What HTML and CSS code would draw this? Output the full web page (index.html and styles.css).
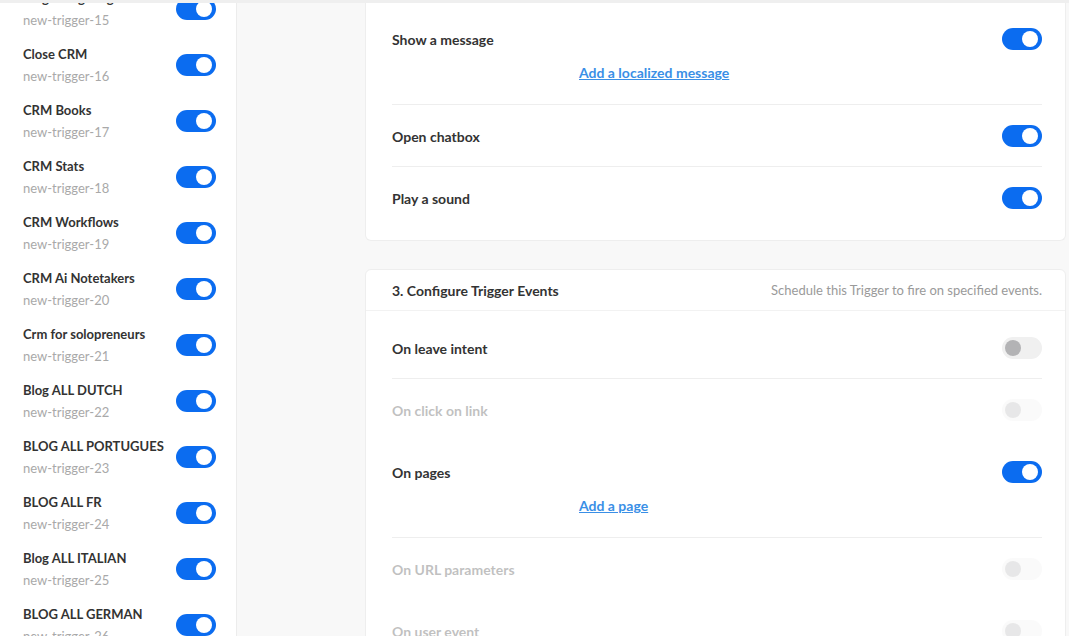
FILE: index.html
```html
<!DOCTYPE html>
<html>
<head>
<meta charset="utf-8">
<link rel="stylesheet" href="styles.css">
</head>
<body>
<div class="app">
  <aside class="sidebar">
    <ul class="trigger-list">
      <li class="trigger"><div class="trigger-text"><div class="trigger-name">Blog Design tags</div><div class="trigger-id">new-trigger-15</div></div><span class="toggle on"></span></li>
      <li class="trigger"><div class="trigger-text"><div class="trigger-name">Close CRM</div><div class="trigger-id">new-trigger-16</div></div><span class="toggle on"></span></li>
      <li class="trigger"><div class="trigger-text"><div class="trigger-name">CRM Books</div><div class="trigger-id">new-trigger-17</div></div><span class="toggle on"></span></li>
      <li class="trigger"><div class="trigger-text"><div class="trigger-name">CRM Stats</div><div class="trigger-id">new-trigger-18</div></div><span class="toggle on"></span></li>
      <li class="trigger"><div class="trigger-text"><div class="trigger-name">CRM Workflows</div><div class="trigger-id">new-trigger-19</div></div><span class="toggle on"></span></li>
      <li class="trigger"><div class="trigger-text"><div class="trigger-name">CRM Ai Notetakers</div><div class="trigger-id">new-trigger-20</div></div><span class="toggle on"></span></li>
      <li class="trigger"><div class="trigger-text"><div class="trigger-name">Crm for solopreneurs</div><div class="trigger-id">new-trigger-21</div></div><span class="toggle on"></span></li>
      <li class="trigger"><div class="trigger-text"><div class="trigger-name">Blog ALL DUTCH</div><div class="trigger-id">new-trigger-22</div></div><span class="toggle on"></span></li>
      <li class="trigger"><div class="trigger-text"><div class="trigger-name">BLOG ALL PORTUGUES</div><div class="trigger-id">new-trigger-23</div></div><span class="toggle on"></span></li>
      <li class="trigger"><div class="trigger-text"><div class="trigger-name">BLOG ALL FR</div><div class="trigger-id">new-trigger-24</div></div><span class="toggle on"></span></li>
      <li class="trigger"><div class="trigger-text"><div class="trigger-name">Blog ALL ITALIAN</div><div class="trigger-id">new-trigger-25</div></div><span class="toggle on"></span></li>
      <li class="trigger"><div class="trigger-text"><div class="trigger-name">BLOG ALL GERMAN</div><div class="trigger-id">new-trigger-26</div></div><span class="toggle on"></span></li>
    </ul>
  </aside>
  <main class="main">
    <section class="card card-actions">
      <div class="row">
        <div class="row-head"><span class="row-label">Show a message</span><span class="toggle on"></span></div>
        <div class="row-link"><a href="#">Add a localized message</a></div>
      </div>
      <div class="row">
        <div class="row-head"><span class="row-label">Open chatbox</span><span class="toggle on"></span></div>
      </div>
      <div class="row last">
        <div class="row-head"><span class="row-label">Play a sound</span><span class="toggle on"></span></div>
      </div>
    </section>
    <section class="card card-events">
      <header class="card-header">
        <span class="card-title">3. Configure Trigger Events</span>
        <span class="card-hint">Schedule this Trigger to fire on specified events.</span>
      </header>
      <div class="card-body">
        <div class="row">
          <div class="row-head"><span class="row-label">On leave intent</span><span class="toggle off"></span></div>
        </div>
        <div class="row disabled">
          <div class="row-head"><span class="row-label">On click on link</span><span class="toggle off"></span></div>
        </div>
        <div class="row">
          <div class="row-head"><span class="row-label">On pages</span><span class="toggle on"></span></div>
          <div class="row-link"><a href="#">Add a page</a></div>
        </div>
        <div class="row disabled">
          <div class="row-head"><span class="row-label">On URL parameters</span><span class="toggle off"></span></div>
        </div>
        <div class="row disabled">
          <div class="row-head"><span class="row-label">On user event</span><span class="toggle off"></span></div>
        </div>
      </div>
    </section>
  </main>
</div>
</body>
</html>
```

FILE: styles.css
```css
* { box-sizing: border-box; }
html, body { margin: 0; padding: 0; }
body {
  font-family: Lato, "Open Sans", "Liberation Sans", sans-serif;
  color: #333;
  background: #f8f8f8;
  width: 1069px;
  height: 636px;
  overflow: hidden;
}
.app {
  display: flex;
  height: 636px;
  border-top: 3px solid #efefef;
  overflow: hidden;
}
.sidebar {
  width: 237px;
  flex: 0 0 237px;
  background: #fff;
  border-right: 1px solid #ececec;
  overflow: hidden;
}
.trigger-list {
  list-style: none;
  margin: -22px 0 0;
  padding: 0;
}
.trigger {
  height: 56px;
  display: flex;
  align-items: center;
  justify-content: space-between;
  padding: 0 20px 0 23px;
}
.trigger-name {
  font-size: 13px;
  font-weight: 700;
  line-height: 22px;
  color: #333;
  white-space: nowrap;
}
.trigger-id {
  font-size: 13px;
  line-height: 22px;
  color: #a9a9a9;
}
.toggle {
  position: relative;
  display: inline-block;
  width: 40px;
  height: 22px;
  border-radius: 11px;
  flex: 0 0 40px;
}
.toggle::after {
  content: "";
  position: absolute;
  top: 3px;
  width: 16px;
  height: 16px;
  border-radius: 50%;
}
.toggle.on { background: #0b6cf0; }
.toggle.on::after { right: 4px; background: #fff; }
.toggle.off { background: #f0f0f0; }
.toggle.off::after { left: 3px; background: #b3b3b5; }

.main {
  flex: 1;
  padding: 0 3px 0 128px;
  display: flex;
  flex-direction: column;
  gap: 28px;
}
.card {
  background: #fff;
  border: 1px solid #eeeeee;
  border-radius: 6px;
}
.card-actions {
  border-top: none;
  border-radius: 0 0 6px 6px;
  padding: 5px 23px 12px 26px;
}
.row {
  padding: 20px 0 19px;
  border-bottom: 1px solid #eeeeee;
}
.row.last { border-bottom: none; }
.row-head {
  display: flex;
  align-items: center;
  justify-content: space-between;
  height: 22px;
}
.row-label {
  font-size: 14px;
  font-weight: 700;
  color: #333;
}
.row-link {
  margin-top: 11px;
  padding-left: 187px;
  line-height: 22px;
  padding-bottom: 1px;
}
.row-link a {
  font-size: 14px;
  font-weight: 700;
  color: #3a8fe6;
  text-decoration: underline;
}
.row.disabled { opacity: 0.3; border-bottom-color: transparent; }

.card-header {
  display: flex;
  align-items: center;
  justify-content: space-between;
  padding: 9px 23px 9px 26px;
  height: 41px;
  border-bottom: 1px solid #f2f2f2;
}
.card-title {
  font-size: 14px;
  font-weight: 700;
  color: #333;
}
.card-hint {
  font-size: 13px;
  color: #9a9a9a;
}
.card-body {
  padding: 6px 23px 0 26px;
}
```
